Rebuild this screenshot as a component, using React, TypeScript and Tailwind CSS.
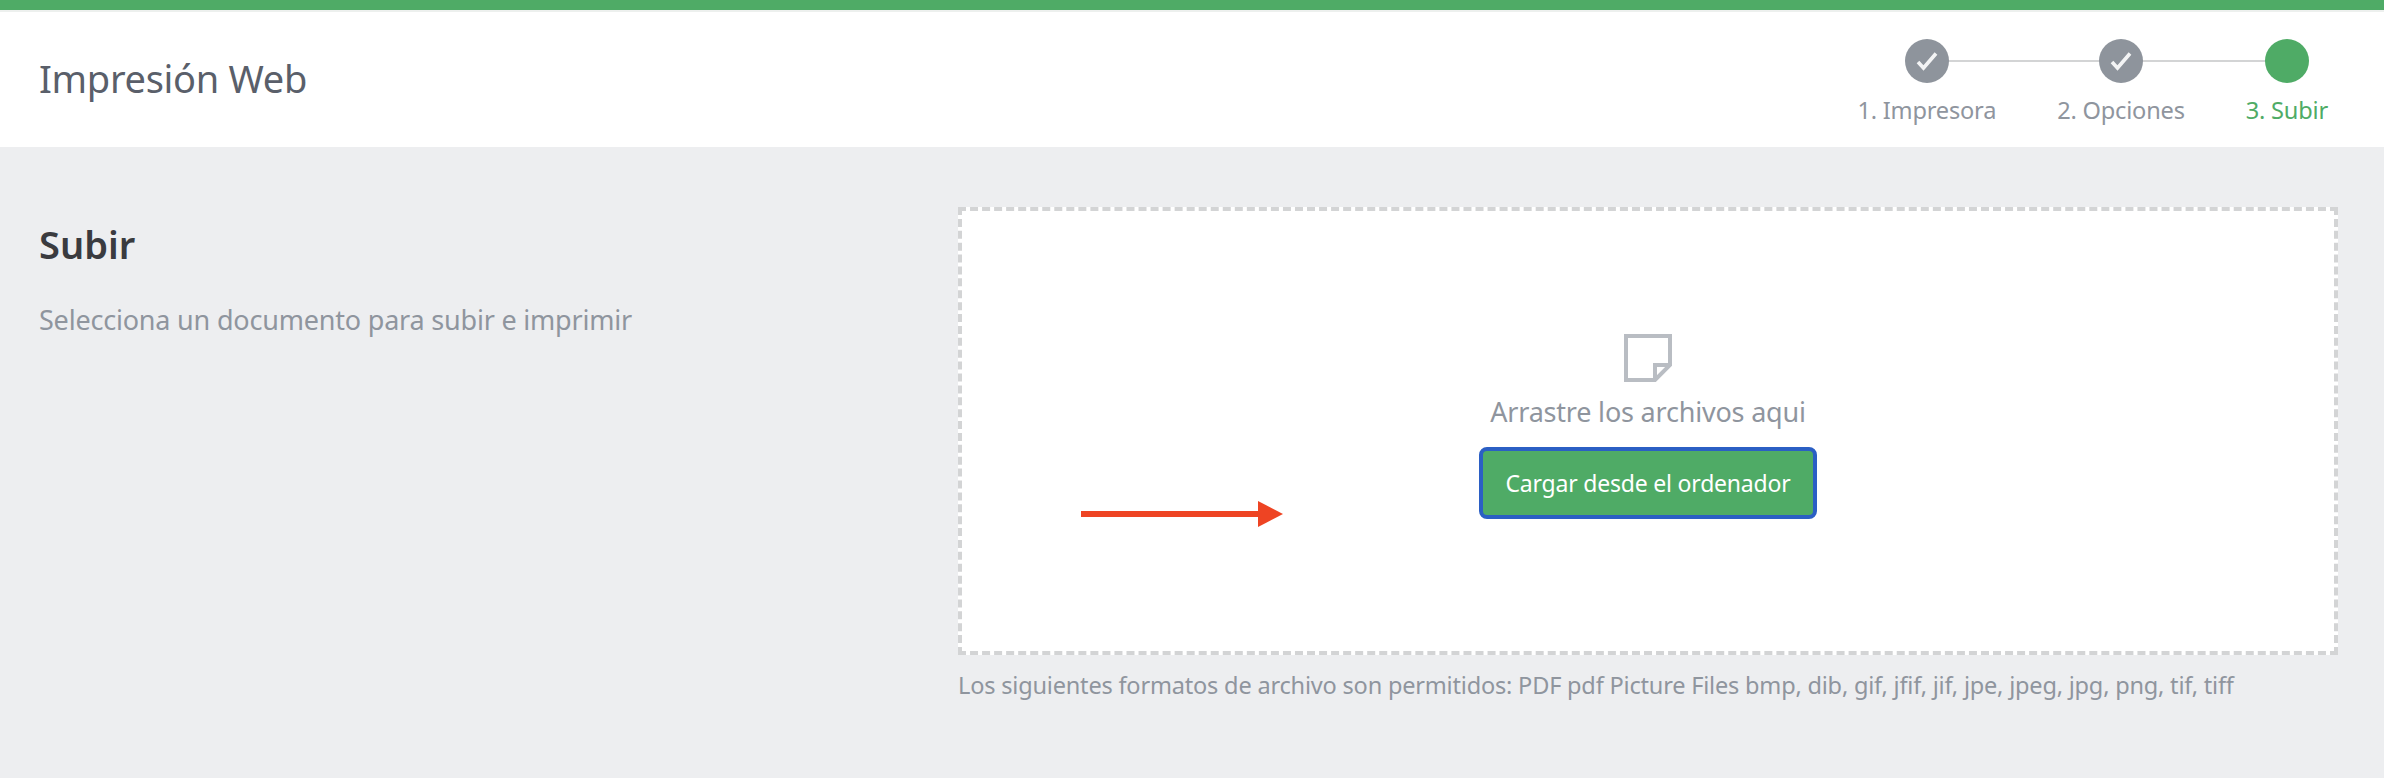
export default function App() {
  const font = { fontFamily: '"Noto Sans", sans-serif' };
  const Check = () => (
    <svg width="24" height="22" viewBox="0 0 24 22" fill="none" className="opacity-90">
      <path d="M3 12 L8.5 18 L21 3.5" stroke="#ffffff" strokeWidth="3.6" />
    </svg>
  );
  const Step = ({ label, done }: { label: string; done: boolean }) => (
    <div className="relative flex flex-col items-center gap-[13px]">
      <div className={`flex h-[44px] w-[44px] items-center justify-center rounded-full ${done ? "bg-[#8e949c]" : "bg-[#4fab66]"}`}>
        {done && <Check />}
      </div>
      <span className={`text-[23.6px] leading-[28px] tracking-[-0.2px] ${done ? "text-[#8f959e]" : "text-[#4fab66]"}`}>{label}</span>
    </div>
  );
  return (
    <div style={font} className="flex h-[778px] w-[2384px] flex-col overflow-hidden bg-[#edeef0]">
      <div className="h-[10px] bg-[#4fab66]" />
      <div className="h-[2px] bg-[#edf0ee]" />
      <header className="flex h-[135px] items-start justify-between bg-white pl-[39px] pr-[56px]">
        <h1 className="mt-[43px] text-[38px] leading-[46px] tracking-[-0.3px] text-[#5a5f6a]">Impresión Web</h1>
        <div className="relative mt-[27px] flex gap-[61px]">
          <div className="absolute left-[68px] right-[42px] top-[21px] h-[2px] bg-[#d3d4d5]" />
          <Step label="1. Impresora" done />
          <Step label="2. Opciones" done />
          <Step label="3. Subir" done={false} />
        </div>
      </header>
      <main className="flex pl-[39px] pr-[46px] pt-[60px]">
        <div className="w-[919px] shrink-0">
          <h2 className="mt-[14px] text-[38px] font-semibold leading-[46px] tracking-[0px] text-[#3a3b3f]">Subir</h2>
          <p className="mt-[37px] text-[27px] leading-[32px] tracking-[-0.2px] text-[#8f959e]">Selecciona un documento para subir e imprimir</p>
        </div>
        <div className="min-w-0 flex-1">
          <div className="relative flex h-[448px] flex-col items-center border-4 border-dashed border-[#d3d4d5] bg-white pt-[123px]">
            <svg width="48" height="48" viewBox="0 0 48 48" fill="none" stroke="#b9bdc3" strokeWidth="4">
              <path d="M2 2 H46 V31 L31 46 H2 Z" />
              <path d="M46 31 H31 V46" />
            </svg>
            <p className="mt-[14px] text-[27px] leading-[32px] tracking-[-0.2px] text-[#8f959e]">Arrastre los archivos aqui</p>
            <button className="mt-[19px] flex h-[72px] w-[338px] items-center justify-center rounded-[8px] border-4 border-[#2b5fc4] bg-[#4fab66] text-[23px] tracking-[-0.2px] text-white">
              Cargar desde el ordenador
            </button>
            <svg className="absolute left-[119px] top-[290px]" width="202" height="26" viewBox="0 0 202 26" fill="#ee4423">
              <rect x="0" y="10" width="180" height="6" />
              <path d="M177 0 L202 13 L177 26 Z" />
            </svg>
          </div>
          <p className="mt-[14px] text-[23.55px] leading-[32px] tracking-[-0.2px] text-[#8f959e]">
            Los siguientes formatos de archivo son permitidos: PDF pdf Picture Files bmp, dib, gif, jfif, jif, jpe, jpeg, jpg, png, tif, tiff
          </p>
        </div>
      </main>
    </div>
  );
}
